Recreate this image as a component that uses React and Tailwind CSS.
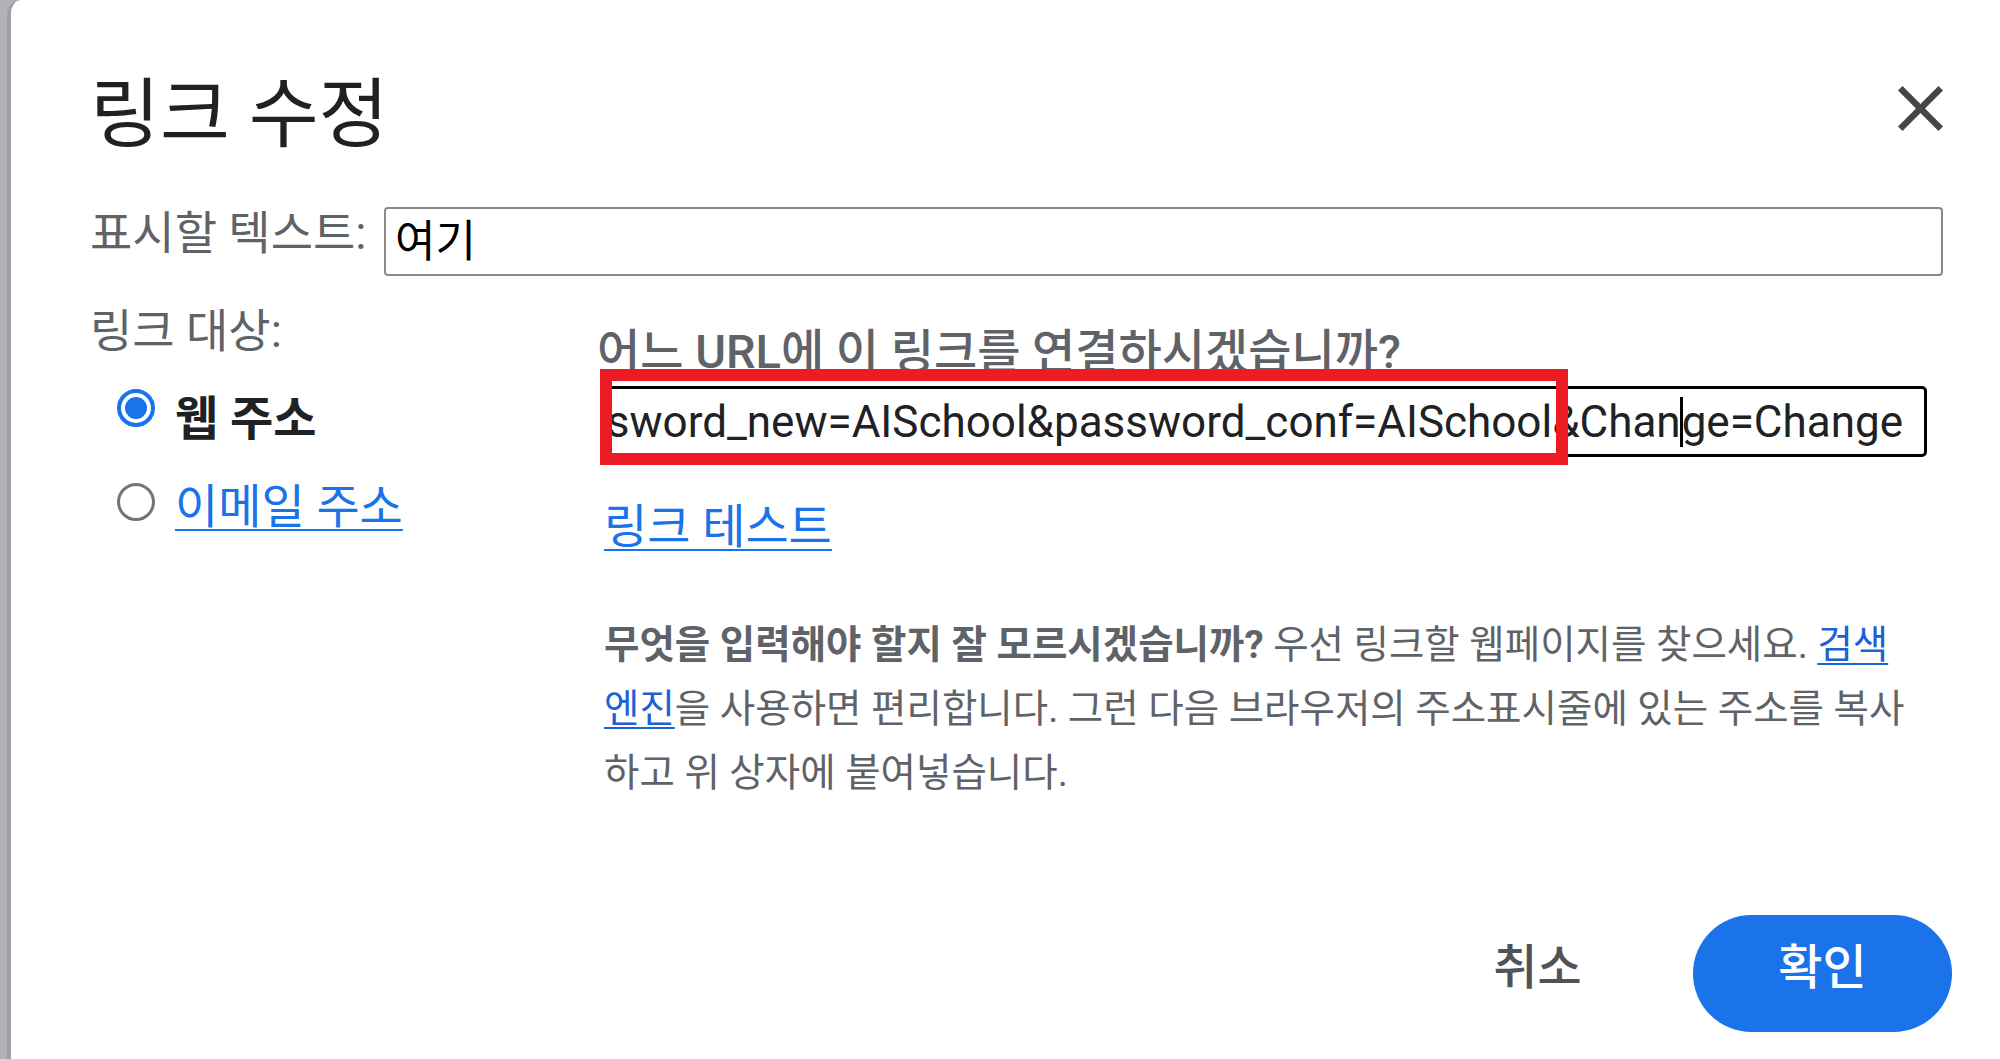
import { useState } from 'react';

function Radio({ checked }) {
  return checked ? (
    <div className="w-[38px] h-[38px] shrink-0 rounded-full border-[4px] border-[#1a73e8] flex items-center justify-center">
      <div className="w-[22px] h-[22px] rounded-full bg-[#1a73e8]" />
    </div>
  ) : (
    <div className="w-[38px] h-[38px] shrink-0 rounded-full border-[3px] border-[#70757a]" />
  );
}

export default function App() {
  const [target, setTarget] = useState('web');

  return (
    <div className="flex h-screen bg-[#b1b3b7] font-[family-name:Roboto,'Noto_Sans_CJK_KR',sans-serif] overflow-hidden">
      <div className="w-[7px] shrink-0" />
      <div className="flex-1 min-w-0 flex flex-col bg-white rounded-tl-[14px] border-l-[4px] border-[#9ea0a4] pl-[79px] pr-[57px]">
        {/* header */}
        <div className="flex items-start justify-between pt-[77px]">
          <h1 className="text-[76px] leading-none text-[#202124] font-normal">링크 수정</h1>
          <button className="mt-[9px]">
            <svg viewBox="5 5 14 14" className="w-[45px] h-[45px]" fill="#444746">
              <path d="M19 6.41L17.59 5 12 10.59 6.41 5 5 6.41 10.59 12 5 17.59 6.41 19 12 13.41 17.59 19 19 17.59 13.41 12z" />
            </svg>
          </button>
        </div>

        {/* display text */}
        <div className="flex items-start mt-[54px]">
          <div className="w-[294px] shrink-0 text-[46px] leading-none text-[#5f6368] mt-[3px]">표시할 텍스트:</div>
          <div className="flex-1 min-w-0 h-[69px] border-2 border-[#8a8a8a] rounded-[4px] flex items-center pl-[9px] text-[44px] leading-none text-black">
            여기
          </div>
        </div>

        {/* link target */}
        <div className="flex items-start mt-[32px]">
          <div className="w-[507px] shrink-0 flex flex-col">
            <div className="text-[46px] leading-none text-[#5f6368]">링크 대상:</div>
            <div className="flex items-start mt-[35px] ml-[27px] gap-[20px] cursor-pointer" onClick={() => setTarget('web')}>
              <Radio checked={target === 'web'} />
              <span className="text-[47px] leading-none font-bold text-[#202124] mt-[6px]">웹 주소</span>
            </div>
            <div className="flex items-start mt-[41px] ml-[27px] gap-[20px] cursor-pointer" onClick={() => setTarget('email')}>
              <Radio checked={target === 'email'} />
              <span className="text-[47px] leading-none text-[#1a73e8] underline underline-offset-[6px] decoration-[2px]">이메일 주소</span>
            </div>
          </div>

          <div className="flex-1 min-w-0 flex flex-col pt-[20px]">
            <div className="text-[47px] leading-none font-medium text-[#5f6368]">어느 URL에 이 링크를 연결하시겠습니까?</div>

            <div className="relative mt-[11px] ml-[3px] mr-[16px]">
              <div className="h-[71px] border-[3px] border-black rounded-[5px] flex items-center justify-end overflow-hidden pr-[21px] text-[44px] leading-none text-[#202124] whitespace-nowrap">
                <span className="shrink-0">http://localhost/dvwa/vulnerabilities/csrf/?password_new=AISchool&amp;password_conf=AISchool&amp;Chan</span>
                <span className="shrink-0 w-[3px] h-[50px] bg-black -mx-[1px]" />
                <span className="shrink-0">ge=Change</span>
              </div>
              <div className="absolute left-0 -top-[17px] w-[968px] h-[96px] border-[12px] border-[#ed1c24] pointer-events-none" />
            </div>

            <a className="mt-[46px] ml-[7px] self-start text-[47px] leading-none text-[#1a73e8] underline underline-offset-[6px] decoration-[2px] cursor-pointer">
              링크 테스트
            </a>

            <p className="mt-[63px] ml-[7px] mr-[25px] text-[38.5px] leading-[64px] text-[#5f6368]">
              <span className="font-bold">무엇을 입력해야 할지 잘 모르시겠습니까?</span> 우선 링크할 웹페이지를 찾으세요.{' '}
              <a className="text-[#1a62d6] underline underline-offset-[5px] decoration-[2px] cursor-pointer">검색 엔진</a>을 사용하면
              편리합니다. 그런 다음 브라우저의 주소표시줄에 있는 주소를 복사하고 위 상자에 붙여넣습니다.
            </p>
          </div>
        </div>

        {/* footer */}
        <div className="flex justify-end gap-[26px] mt-auto mb-[27px] -mr-[9px]">
          <button className="w-[259px] h-[117px] rounded-full flex items-center justify-center pb-[12px] text-[48px] leading-none font-medium text-[#505357]">
            취소
          </button>
          <button className="w-[259px] h-[117px] rounded-full bg-[#1a73e8] flex items-center justify-center pb-[12px] text-[48px] leading-none font-medium text-white">
            확인
          </button>
        </div>
      </div>
    </div>
  );
}
